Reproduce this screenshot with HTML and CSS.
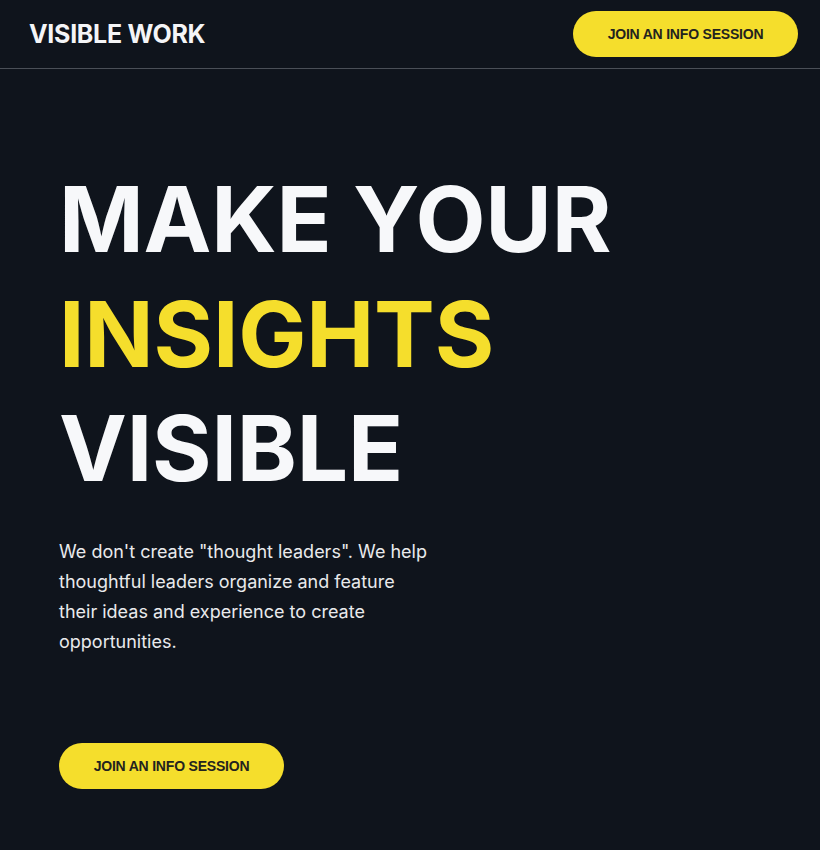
FILE: index.html
```html
<!DOCTYPE html>
<html lang="en">
<head>
<meta charset="utf-8">
<title>Visible Work</title>
<link rel="stylesheet" href="styles.css">
</head>
<body>
<header class="topbar">
  <div class="logo">VISIBLE WORK</div>
  <a class="btn" href="#">JOIN AN INFO SESSION</a>
</header>
<main class="hero">
  <h1 class="headline">MAKE YOUR<br><span class="accent">INSIGHTS</span><br>VISIBLE</h1>
  <p class="lede">We don't create "thought leaders". We help thoughtful leaders organize and feature their ideas and experience to create opportunities.</p>
  <a class="btn" href="#">JOIN AN INFO SESSION</a>
</main>
</body>
</html>
```
FILE: styles.css
```css
* { box-sizing: border-box; }
html, body { margin: 0; padding: 0; }
body {
  background: #0f141c;
  color: #ffffff;
  font-family: Inter, "Liberation Sans", sans-serif;
  min-height: 850px;
}
.topbar {
  display: flex;
  align-items: center;
  justify-content: space-between;
  height: 69px;
  padding: 0 22px 0 29px;
  border-bottom: 1px solid #4a4f57;
}
.logo {
  font-family: Inter, "Liberation Sans", sans-serif;
  font-weight: 700;
  font-size: 25px;
  letter-spacing: -0.3px;
  color: #f4f5f7;
}
.btn {
  display: inline-flex;
  align-items: center;
  justify-content: center;
  width: 225px;
  height: 46px;
  border-radius: 23px;
  background: #f5de2c;
  color: #23231f;
  font-family: "Liberation Sans", Arial, sans-serif;
  font-weight: 700;
  font-size: 14px;
  letter-spacing: -0.2px;
  text-decoration: none;
}
.hero {
  padding: 93px 0 0 59px;
}
.headline {
  margin: 0;
  font-family: Inter, "Liberation Sans", sans-serif;
  font-weight: 700;
  font-size: 91px;
  line-height: 114.5px;
  letter-spacing: -0.2px;
  color: #f7f8fa;
}
.accent { color: #f5de2c; }
.lede {
  width: 375px;
  margin: 31px 0 86px;
  font-size: 18px;
  line-height: 30px;
  color: #e9eaec;
}
```
